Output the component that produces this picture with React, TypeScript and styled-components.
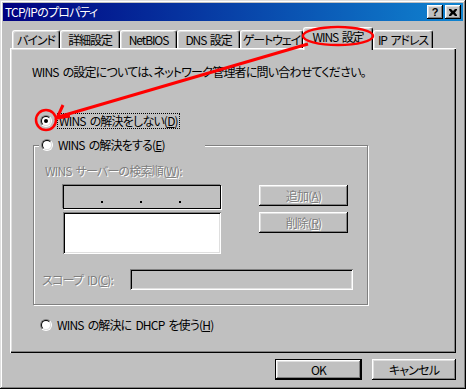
import React from "react";
import styled, { createGlobalStyle } from "styled-components";

const GlobalStyle = createGlobalStyle`
  html, body { margin: 0; padding: 0; background: #c0c0c0; }
  body {
    font-family: "Noto Sans CJK JP", "Noto Sans", sans-serif;
    font-size: 12px;
    font-feature-settings: "palt";
    letter-spacing: -0.8px;
    word-spacing: 2px;
    color: #000;
  }
  * { box-sizing: border-box; }
`;

const raised = `inset -1px -1px #000, inset 1px 1px #fff, inset -2px -2px #808080, inset 2px 2px #dfdfdf`;
const sunken = `inset 1px 1px #808080, inset -1px -1px #fff, inset 2px 2px #000, inset -2px -2px #dfdfdf`;

const Window = styled.div`
  position: relative;
  width: 466px;
  height: 389px;
  background: #c0c0c0;
  padding: 3px;
  box-shadow: inset -1px -1px #000, inset 1px 1px #dfdfdf, inset -2px -2px #808080, inset 2px 2px #fff;
  display: flex;
  flex-direction: column;
`;

const TitleBar = styled.div`
  height: 18px;
  flex: none;
  background: linear-gradient(to right, #000080, #1084d0);
  color: #fff;
  display: flex;
  align-items: center;
  justify-content: space-between;
  padding: 0 2px;
`;

const TitleText = styled.span`
  line-height: 18px;
  font-size: 12px;
`;

const TitleButtons = styled.div`
  display: flex;
  gap: 2px;
`;

const TitleButton = styled.div`
  width: 16px;
  height: 14px;
  background: #c0c0c0;
  color: #000;
  box-shadow: ${raised};
  display: flex;
  align-items: center;
  justify-content: center;
  font: bold 11px "Liberation Sans", sans-serif;
  letter-spacing: 0;
  line-height: 14px;
`;

const TabRow = styled.div`
  display: flex;
  align-items: flex-end;
  height: 21px;
  margin: 6px 0 0 9px;
  position: relative;
  z-index: 1;
  flex: none;
`;

const Tab = styled.div<{ $w: number; $active?: boolean }>`
  width: ${(p) => p.$w}px;
  height: ${(p) => (p.$active ? 23 : 18)}px;
  margin-bottom: ${(p) => (p.$active ? -2 : 0)}px;
  padding-bottom: ${(p) => (p.$active ? 4 : 0)}px;
  background: #c0c0c0;
  border-top: 1px solid #fff;
  border-left: 1px solid #fff;
  border-right: 1px solid #000;
  border-radius: 3px 3px 0 0;
  box-shadow: inset -1px 0 #808080, inset 1px 1px #dfdfdf;
  display: flex;
  align-items: center;
  justify-content: center;
  white-space: nowrap;
  line-height: 14px;
  letter-spacing: -1.1px;
`;

const Panel = styled.div`
  width: 446px;
  height: 305px;
  margin-left: 7px;
  flex: none;
  box-shadow: inset 1px 1px #fff, inset -1px -1px #000, inset -2px -2px #808080, inset 2px 2px #dfdfdf;
  padding: 17px 0 0 22px;
  display: flex;
  flex-direction: column;
  align-items: flex-start;
`;

const Desc = styled.div`
  line-height: 14px;
  white-space: nowrap;
`;

const RadioRow = styled.div<{ $mt: number }>`
  display: flex;
  align-items: center;
  gap: 5px;
  height: 16px;
  margin-top: ${(p) => p.$mt}px;
  margin-left: 8px;
  white-space: nowrap;
  line-height: 14px;
`;

const RadioOuter = styled.span`
  width: 12px;
  height: 12px;
  flex: none;
  border-radius: 50%;
  border: 1px solid;
  border-color: #808080 #fff #fff #808080;
  display: flex;
`;

const RadioInner = styled.span`
  flex: 1;
  border-radius: 50%;
  border: 1px solid;
  border-color: #000 #dfdfdf #dfdfdf #000;
  background: #fff;
  display: flex;
  align-items: center;
  justify-content: center;
`;

const RadioDot = styled.span`
  width: 4px;
  height: 4px;
  border-radius: 50%;
  background: #000;
`;

const FocusLabel = styled.span`
  border: 1px dotted #000;
  padding: 0 1px;
  line-height: 14px;
`;

const GroupBox = styled.div`
  margin-top: 16px;
  margin-left: 1px;
  width: 335px;
  height: 160px;
  flex: none;
  border: 1px solid #808080;
  box-shadow: inset 1px 1px #fff, 1px 1px #fff;
  padding: 0 0 0 8px;
  display: flex;
  flex-direction: column;
  align-items: flex-start;
`;

const GroupLegend = styled.div`
  margin: -9px 0 0 -3px;
  width: 166px;
  height: 16px;
  background: #c0c0c0;
  display: flex;
  align-items: center;
  gap: 5px;
  padding-left: 2px;
  white-space: nowrap;
  line-height: 14px;
`;

const Disabled = styled.span`
  color: #808080;
  text-shadow: 1px 1px 0 #fff;
  white-space: nowrap;
  line-height: 14px;
`;

const SearchLabel = styled(Disabled)`
  margin: 11px 0 0 3px;
`;

const ServerRow = styled.div`
  display: flex;
  margin-top: 7px;
  margin-left: 21px;
`;

const ServerColumn = styled.div`
  display: flex;
  flex-direction: column;
  gap: 3px;
  width: 158px;
`;

const IpBox = styled.div`
  height: 24px;
  background: #c0c0c0;
  border: 1px solid #000;
  box-shadow: -1px -1px #808080, 1px 1px #fff;
  display: flex;
  align-items: stretch;
  padding: 0 3px 0 1px;
`;

const IpSeg = styled.div`
  flex: 1;
  background: #c0c0c0;
`;

const IpDot = styled.div`
  width: 5px;
  display: flex;
  align-items: flex-end;
  justify-content: center;
  padding-bottom: 5px;
  &::after {
    content: "";
    width: 2px;
    height: 2px;
    background: #000;
  }
`;

const ListBox = styled.div`
  height: 42px;
  background: #fff;
  box-shadow: ${sunken};
`;

const ButtonColumn = styled.div`
  display: flex;
  flex-direction: column;
  gap: 6px;
  margin-left: 38px;
`;

const PushButton = styled.div<{ $w: number; $default?: boolean }>`
  width: ${(p) => p.$w}px;
  height: 21px;
  background: #c0c0c0;
  box-shadow: ${(p) =>
    p.$default
      ? `inset 1px 1px #000, inset -1px -1px #000, inset -2px -2px #000, inset 2px 2px #fff, inset -3px -3px #808080, inset 3px 3px #dfdfdf`
      : raised};
  display: flex;
  align-items: center;
  justify-content: center;
  line-height: 14px;
  white-space: nowrap;
`;

const ScopeRow = styled.div`
  display: flex;
  align-items: center;
  margin-top: 15px;
`;

const ScopeLabel = styled(Disabled)`
  width: 88px;
`;

const ScopeInput = styled.div`
  width: 223px;
  height: 21px;
  background: #c0c0c0;
  box-shadow: ${sunken};
`;

const Footer = styled.div`
  display: flex;
  justify-content: flex-end;
  gap: 10px;
  margin-top: 6px;
  padding-right: 7px;
`;

const Overlay = styled.svg`
  position: absolute;
  left: 0;
  top: 0;
  z-index: 5;
  pointer-events: none;
`;

function Radio({ checked }: { checked?: boolean }) {
  return (
    <RadioOuter>
      <RadioInner>{checked && <RadioDot />}</RadioInner>
    </RadioOuter>
  );
}

export default function App() {
  return (
    <>
      <GlobalStyle />
      <Window>
        <TitleBar>
          <TitleText>TCP/IPのプロパティ</TitleText>
          <TitleButtons>
            <TitleButton>?</TitleButton>
            <TitleButton>
              <svg width="8" height="7" viewBox="0 0 8 7">
                <path d="M0 0h2l2 2 2-2h2v1L6 3.5 8 6v1H6L4 5 2 7H0V6l2-2.5L0 1z" fill="#000" />
              </svg>
            </TitleButton>
          </TitleButtons>
        </TitleBar>

        <TabRow>
          <Tab $w={48}>バインド</Tab>
          <Tab $w={60}>詳細設定</Tab>
          <Tab $w={57}>NetBIOS</Tab>
          <Tab $w={63}>DNS 設定</Tab>
          <Tab $w={63}>ゲートウェイ</Tab>
          <Tab $w={70} $active>WINS 設定</Tab>
          <Tab $w={60}>IP アドレス</Tab>
        </TabRow>

        <Panel>
          <Desc>WINS の設定については、ネットワーク管理者に問い合わせてください。</Desc>

          <RadioRow $mt={34}>
            <Radio checked />
            <FocusLabel>
              WINS の解決をしない(<u>D</u>)
            </FocusLabel>
          </RadioRow>

          <GroupBox>
            <GroupLegend>
              <Radio />
              <span>
                WINS の解決をする(<u>E</u>)
              </span>
            </GroupLegend>

            <SearchLabel>
              WINS サーバーの検索順(<u>W</u>):
            </SearchLabel>

            <ServerRow>
              <ServerColumn>
                <IpBox>
                  <IpSeg />
                  <IpDot />
                  <IpSeg />
                  <IpDot />
                  <IpSeg />
                  <IpDot />
                  <IpSeg />
                </IpBox>
                <ListBox />
              </ServerColumn>
              <ButtonColumn>
                <PushButton $w={89}>
                  <Disabled>
                    追加(<u>A</u>)
                  </Disabled>
                </PushButton>
                <PushButton $w={89}>
                  <Disabled>
                    削除(<u>R</u>)
                  </Disabled>
                </PushButton>
              </ButtonColumn>
            </ServerRow>

            <ScopeRow>
              <ScopeLabel>
                スコープ ID(<u>C</u>):
              </ScopeLabel>
              <ScopeInput />
            </ScopeRow>
          </GroupBox>

          <RadioRow $mt={12}>
            <Radio />
            <span>
              WINS の解決に DHCP を使う(<u>H</u>)
            </span>
          </RadioRow>
        </Panel>

        <Footer>
          <PushButton $w={87} $default>
            OK
          </PushButton>
          <PushButton $w={84}>キャンセル</PushButton>
        </Footer>

        <Overlay width="466" height="389" viewBox="0 0 466 389">
          <ellipse cx="338" cy="36" rx="35" ry="9" fill="none" stroke="#ff0000" strokeWidth="2.5" />
          <line x1="308" y1="44" x2="58" y2="117" stroke="#ff0000" strokeWidth="3" />
          <polyline points="63,105 57,118 70,116" fill="none" stroke="#ff0000" strokeWidth="3" />
          <circle cx="46" cy="120" r="10" fill="none" stroke="#ff0000" strokeWidth="2.5" />
        </Overlay>
      </Window>
    </>
  );
}
